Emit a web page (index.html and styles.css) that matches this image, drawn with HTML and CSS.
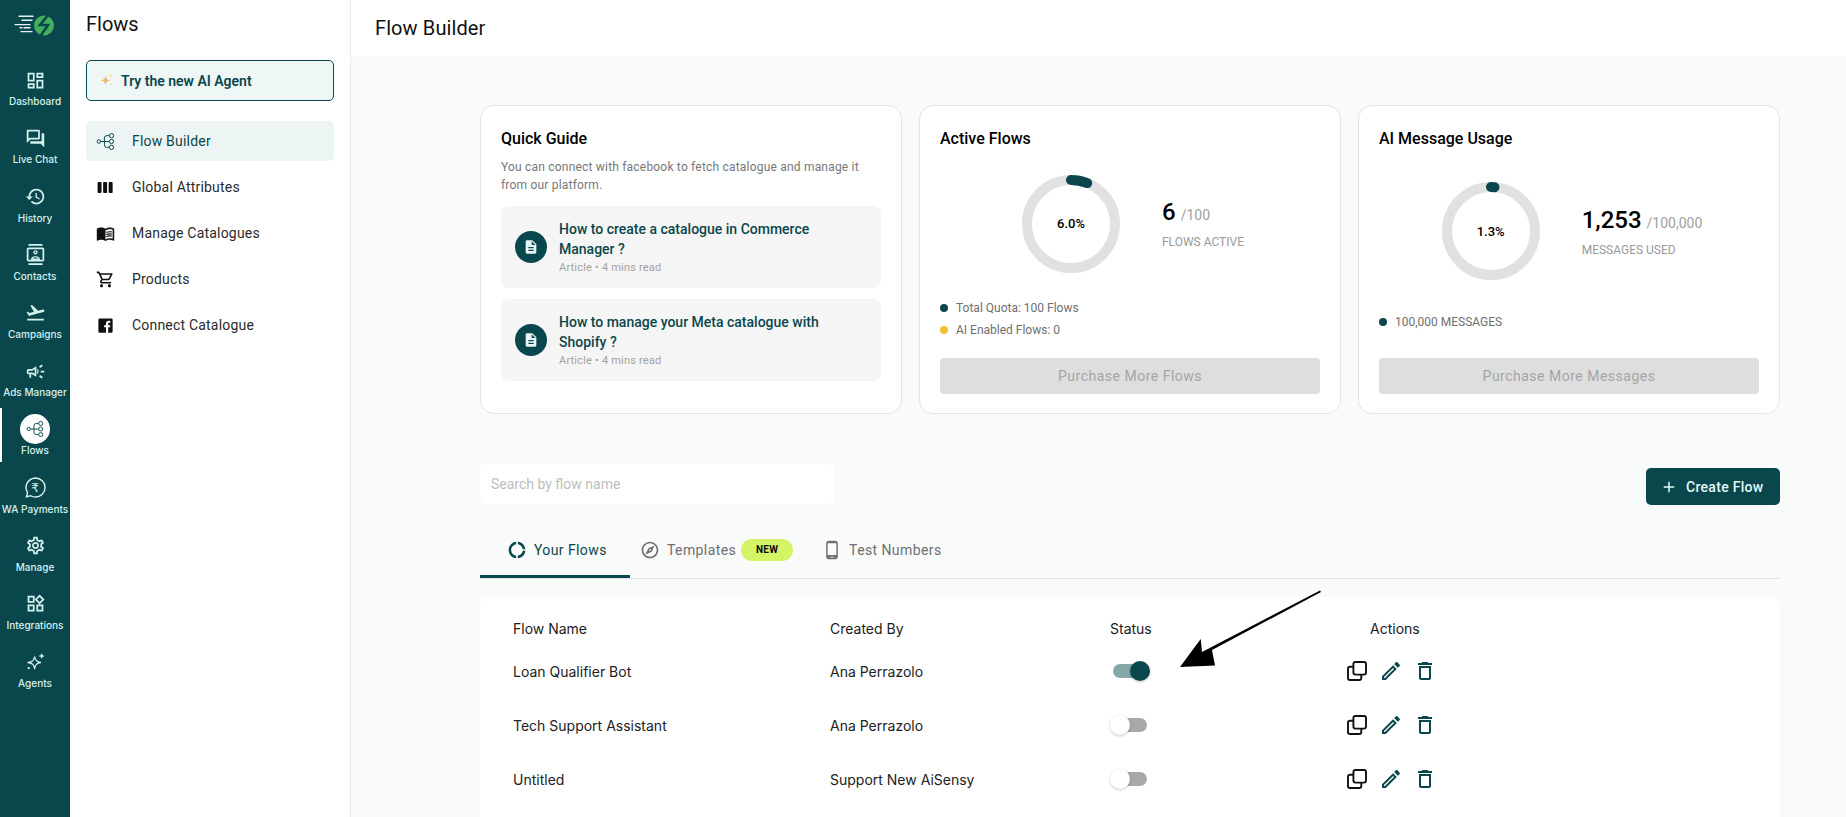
FILE: index.html
```html
<!DOCTYPE html>
<html lang="en">
<head>
<meta charset="utf-8">
<title>Flow Builder</title>
<link rel="stylesheet" href="styles.css">
</head>
<body>
<svg class="defs" width="0" height="0" aria-hidden="true">
  <defs>
    <symbol id="i-flow" viewBox="0 0 24 24"><g fill="none" stroke="currentColor" stroke-width="1.25"><circle cx="3.6" cy="12" r="2.2"/><circle cx="19.6" cy="4.6" r="2.7"/><circle cx="19.6" cy="12" r="2.7"/><circle cx="19.6" cy="19.4" r="2.7"/><path d="M5.8 12h11.1M10.6 12V7.6a3 3 0 0 1 3-3h3.3M10.6 12v4.4a3 3 0 0 0 3 3h3.3"/></g></symbol>
    <symbol id="i-doc" viewBox="0 0 24 24"><path fill="currentColor" d="M14 2H6c-1.1 0-1.99.9-1.99 2L4 20c0 1.1.89 2 1.99 2H18c1.1 0 2-.9 2-2V8l-6-6zm2 16H8v-2h8v2zm0-4H8v-2h8v2zm-3-5V3.5L18.5 9H13z"/></symbol>
    <symbol id="i-copy" viewBox="0 0 24 24"><g fill="none" stroke="currentColor" stroke-width="1.9" stroke-linejoin="round"><rect x="8.4" y="3" width="12.6" height="12.6" rx="2"/><path d="M8.4 7.8H5a2 2 0 0 0-2 2V19a2 2 0 0 0 2 2h9.3a2 2 0 0 0 2-2v-3.4"/></g></symbol>
    <symbol id="i-edit" viewBox="0 0 24 24"><path fill="currentColor" d="M3 17.25V21h3.75L17.81 9.94l-3.75-3.75L3 17.25zM5.92 19H5v-.92l9.06-9.06.92.92L5.92 19zM20.71 5.63l-2.34-2.34c-.2-.2-.45-.29-.71-.29s-.51.1-.7.29l-1.83 1.83 3.75 3.75 1.83-1.83c.39-.39.39-1.02 0-1.41z"/></symbol>
    <symbol id="i-trash" viewBox="0 0 24 24"><path fill="currentColor" d="M6 19c0 1.1.9 2 2 2h8c1.1 0 2-.9 2-2V7H6v12zM8 9h8v10H8V9zm7.5-5l-1-1h-5l-1 1H5v2h14V4z"/></symbol>
  </defs>
</svg>

<nav class="rail">
  <svg class="logo" viewBox="0 0 42 22" width="42" height="22" aria-hidden="true">
    <g stroke="#e4f3ef" stroke-width="1.4" stroke-linecap="round"><path d="M5 2.3h14M8 6.2h10M1 10.6h15M6 13.8h2M10 13.8h6M7 17.6h11"/></g>
    <circle cx="30" cy="11.5" r="10" fill="#43b05c"/>
    <path d="M34.5 0.5 26 11h8l-7.5 11" fill="none" stroke="#0a474c" stroke-width="2.6"/>
  </svg>
  <a class="rail-item"><span class="rail-icon"><svg viewBox="0 0 24 24"><path d="M19 5v2h-4V5h4M9 5v6H5V5h4m10 8v6h-4v-6h4M9 17v2H5v-2h4M21 3h-8v6h8V3zM11 3H3v10h8V3zm10 8h-8v10h8V11zm-10 4H3v6h8v-6z"/></svg></span><span class="rail-label">Dashboard</span></a>
  <a class="rail-item"><span class="rail-icon"><svg viewBox="0 0 24 24"><path d="M15 4v7H5.17L4 12.17V4h11m1-2H3c-.55 0-1 .45-1 1v14l4-4h10c.55 0 1-.45 1-1V3c0-.55-.45-1-1-1zm5 4h-2v9H6v2c0 .55.45 1 1 1h11l4 4V7c0-.55-.45-1-1-1z"/></svg></span><span class="rail-label">Live Chat</span></a>
  <a class="rail-item"><span class="rail-icon"><svg viewBox="0 0 24 24"><path d="M13 3c-4.97 0-9 4.03-9 9H1l3.89 3.89.07.14L9 12H6c0-3.87 3.13-7 7-7s7 3.13 7 7-3.13 7-7 7c-1.93 0-3.68-.79-4.94-2.06l-1.42 1.42C8.27 19.99 10.51 21 13 21c4.97 0 9-4.03 9-9s-4.03-9-9-9zm-1 5v5l4.28 2.54.72-1.21-3.5-2.08V8H12z"/></svg></span><span class="rail-label">History</span></a>
  <a class="rail-item"><span class="rail-icon"><svg viewBox="0 0 24 24"><path d="M20 0H4v2h16V0zM4 24h16v-2H4v2zM20 4H4c-1.1 0-2 .9-2 2v12c0 1.1.9 2 2 2h16c1.1 0 2-.9 2-2V6c0-1.1-.9-2-2-2zm0 14H4V6h16v12zm-8-6c1.38 0 2.5-1.12 2.5-2.5S13.38 7 12 7 9.5 8.12 9.5 9.5 10.62 12 12 12zm0-3.5c.55 0 1 .45 1 1s-.45 1-1 1-1-.45-1-1 .45-1 1-1zM17 16.99c0-2.09-3.31-2.99-5-2.99s-5 .9-5 2.99V18h10v-1.01zM8.81 16.5c.61-.52 2.03-1 3.19-1 1.17 0 2.59.48 3.2 1H8.81z"/></svg></span><span class="rail-label">Contacts</span></a>
  <a class="rail-item"><span class="rail-icon"><svg viewBox="0 0 24 24"><path d="M2.5 19h19v2h-19zm19.57-9.36c-.21-.8-1.04-1.28-1.84-1.06L14.92 10l-6.9-6.43-1.93.51 4.14 7.17-4.97 1.33-1.97-1.54-1.45.39 1.82 3.16.77 1.33 1.6-.43 5.31-1.42 4.35-1.16L21 11.49c.81-.23 1.28-1.05 1.07-1.85z"/></svg></span><span class="rail-label">Campaigns</span></a>
  <a class="rail-item"><span class="rail-icon"><svg viewBox="0 0 24 24"><path d="M18 11v2h4v-2h-4zm-2 6.61c.96.71 2.21 1.65 3.2 2.39.4-.53.8-1.07 1.2-1.6-.99-.74-2.24-1.68-3.2-2.4-.4.54-.8 1.08-1.2 1.61zM20.4 5.6c-.4-.53-.8-1.07-1.2-1.6-.99.74-2.24 1.68-3.2 2.4.4.53.8 1.07 1.2 1.6.96-.72 2.21-1.65 3.2-2.4zM4 9c-1.1 0-2 .9-2 2v2c0 1.1.9 2 2 2h1v4h2v-4h1l5 3V6L8 9H4zm5.03 1.71L11 9.53v4.94l-1.97-1.18-.48-.29H4v-2h4.55l.48-.29zM15.5 12c0-1.33-.58-2.53-1.5-3.35v6.69c.92-.81 1.5-2.01 1.5-3.34z"/></svg></span><span class="rail-label">Ads Manager</span></a>
  <a class="rail-item is-active"><span class="rail-icon"><svg class="flow-mini"><use href="#i-flow"/></svg></span><span class="rail-label">Flows</span></a>
  <a class="rail-item"><span class="rail-icon"><span class="rupee"><svg viewBox="0 0 24 24"><path fill="none" stroke="currentColor" stroke-width="1.5" d="M12 2a10 10 0 0 1 0 20c-2 0-3.700-.5-5-1.400L2.500 21.600l1.200-4.300A10 10 0 0 1 12 2z"/></svg><span class="rupee-sign">₹</span></span></span><span class="rail-label">WA Payments</span></a>
  <a class="rail-item"><span class="rail-icon"><svg viewBox="0 0 24 24"><path d="M19.43 12.98c.04-.32.07-.64.07-.98 0-.34-.03-.66-.07-.98l2.11-1.65c.19-.15.24-.42.12-.64l-2-3.46c-.09-.16-.26-.25-.44-.25-.06 0-.12.01-.17.03l-2.49 1c-.52-.4-1.08-.73-1.69-.98l-.38-2.65C14.46 2.18 14.25 2 14 2h-4c-.25 0-.46.18-.49.42l-.38 2.65c-.61.25-1.17.59-1.69.98l-2.49-1c-.06-.02-.12-.03-.18-.03-.17 0-.34.09-.43.25l-2 3.46c-.13.22-.07.49.12.64l2.11 1.65c-.04.32-.07.65-.07.98 0 .33.03.66.07.98l-2.11 1.65c-.19.15-.24.42-.12.64l2 3.46c.09.16.26.25.44.25.06 0 .12-.01.17-.03l2.49-1c.52.4 1.08.73 1.69.98l.38 2.65c.03.24.24.42.49.42h4c.25 0 .46-.18.49-.42l.38-2.65c.61-.25 1.17-.59 1.69-.98l2.49 1c.06.02.12.03.18.03.17 0 .34-.09.43-.25l2-3.46c.12-.22.07-.49-.12-.64l-2.11-1.65zm-1.98-1.71c.04.31.05.52.05.73 0 .21-.02.43-.05.73l-.14 1.13.89.7 1.08.84-.7 1.21-1.27-.51-1.04-.42-.9.68c-.43.32-.84.56-1.25.73l-1.06.43-.16 1.13-.2 1.35h-1.4l-.19-1.35-.16-1.13-1.06-.43c-.43-.18-.83-.41-1.23-.71l-.91-.7-1.06.43-1.27.51-.7-1.21 1.08-.84.89-.7-.14-1.13c-.03-.31-.05-.54-.05-.74s.02-.43.05-.73l.14-1.13-.89-.7-1.08-.84.7-1.21 1.27.51 1.04.42.9-.68c.43-.32.84-.56 1.25-.73l1.06-.43.16-1.13.2-1.35h1.39l.19 1.35.16 1.13 1.06.43c.43.18.83.41 1.23.71l.91.7 1.06-.43 1.27-.51.7 1.21-1.07.85-.89.7.14 1.13zM12 8c-2.21 0-4 1.790-4 4s1.790 4 4 4 4-1.790 4-4-1.790-4-4-4zm0 6c-1.100 0-2-.9-2-2s.9-2 2-2 2 .9 2 2-.9 2-2 2z"/></svg></span><span class="rail-label">Manage</span></a>
  <a class="rail-item"><span class="rail-icon"><svg viewBox="0 0 24 24"><path d="M16.66 4.520l2.830 2.830-2.830 2.830-2.830-2.830 2.830-2.830M9 5v4H5V5h4m10 10v4h-4v-4h4M9 15v4H5v-4h4m7.660-13.310L11 7.340 16.660 13l5.660-5.660-5.660-5.650zM11 3H3v8h8V3zm10 10h-8v8h8v-8zm-10 0H3v8h8v-8z"/></svg></span><span class="rail-label">Integrations</span></a>
  <a class="rail-item"><span class="rail-icon"><svg viewBox="0 0 24 24"><path d="M11 5.500c.7 4 2.200 5.600 6.700 6.500-4.500.9-6 2.500-6.700 7-.7-4.500-2.300-6.100-7.500-7 5.200-.900 6.800-2.500 7.500-6.500z" fill="none" stroke="currentColor" stroke-width="1.500" stroke-linejoin="round"/><path d="M19 2v5M16.500 4.500h5" fill="none" stroke="currentColor" stroke-width="1.600"/><circle cx="4.200" cy="18.500" r="1.300"/></svg></span><span class="rail-label">Agents</span></a>
</nav>

<aside class="subnav">
  <h2 class="subnav-title">Flows</h2>
  <button class="ai-btn" type="button">
    <svg class="ai-spark" viewBox="0 0 16 16" aria-hidden="true"><path fill="#f7b267" d="M7 3c.6 3.200 1.700 4.300 5 5-3.300.7-4.400 1.800-5 5-.6-3.200-1.700-4.300-5-5 3.300-.7 4.400-1.800 5-5z"/><path fill="#f5d76e" d="M12.500 1c.2 1.300.7 1.800 2 2-1.300.2-1.800.7-2 2-.2-1.300-.7-1.800-2-2 1.300-.2 1.800-.7 2-2zM13 10.500c.2 1 .5 1.300 1.500 1.500-1 .2-1.300.5-1.500 1.500-.2-1-.5-1.300-1.500-1.500 1-.2 1.300-.5 1.500-1.500z"/></svg>
    <span>Try the new AI Agent</span>
  </button>
  <ul class="menu">
    <li class="menu-item is-current"><svg class="menu-icon"><use href="#i-flow"/></svg><span>Flow Builder</span></li>
    <li class="menu-item"><svg class="menu-icon" viewBox="0 0 24 24"><path d="M6 5H3c-.55 0-1 .45-1 1v12c0 .55.45 1 1 1h3c.55 0 1-.45 1-1V6c0-.55-.45-1-1-1zm14 0h-3c-.55 0-1 .45-1 1v12c0 .55.45 1 1 1h3c.55 0 1-.45 1-1V6c0-.55-.45-1-1-1zm-7 0h-3c-.55 0-1 .45-1 1v12c0 .55.45 1 1 1h3c.55 0 1-.45 1-1V6c0-.55-.45-1-1-1z"/></svg><span>Global Attributes</span></li>
    <li class="menu-item"><svg class="menu-icon" viewBox="0 0 24 24"><path d="M21 5c-1.110-.35-2.330-.5-3.500-.5-1.950 0-4.050.4-5.500 1.500-1.450-1.100-3.550-1.500-5.500-1.500S2.450 4.900 1 6v14.650c0 .25.25.5.5.5.1 0 .15-.05.25-.05C3.100 20.450 5.050 20 6.500 20c1.950 0 4.050.4 5.500 1.500 1.350-.85 3.800-1.500 5.500-1.500 1.650 0 3.350.3 4.750 1.050.1.05.15.05.25.05.25 0 .5-.25.5-.5V6c-.6-.45-1.250-.75-2-1zm0 13.500c-1.100-.35-2.300-.5-3.500-.5-1.700 0-4.150.65-5.500 1.500V8c1.350-.85 3.800-1.500 5.500-1.500 1.200 0 2.400.15 3.500.5v11.500z"/><path d="M17.500 10.500c.88 0 1.730.09 2.500.26V9.240c-.79-.15-1.640-.24-2.500-.24-1.700 0-3.240.29-4.500.83v1.660c1.130-.64 2.700-.99 4.500-.99zM13 12.490v1.660c1.130-.64 2.700-.99 4.500-.99.88 0 1.730.09 2.500.26V11.900c-.79-.15-1.640-.24-2.500-.24-1.700 0-3.240.3-4.500.83zM17.500 14.330c-1.700 0-3.240.29-4.500.83v1.660c1.130-.64 2.700-.99 4.500-.99.88 0 1.730.09 2.500.26v-1.520c-.79-.16-1.640-.24-2.500-.24z"/></svg><span>Manage Catalogues</span></li>
    <li class="menu-item"><svg class="menu-icon" viewBox="0 0 24 24"><path d="M15.550 13c.75 0 1.410-.41 1.750-1.030l3.580-6.490c.37-.66-.11-1.480-.87-1.480H5.210l-.94-2H1v2h2l3.600 7.590-1.350 2.440C4.520 15.370 5.480 17 7 17h12v-2H7l1.100-2h7.450zM6.160 6h12.150l-2.760 5H8.530L6.160 6zM7 18c-1.100 0-1.990.9-1.990 2S5.900 22 7 22s2-.9 2-2-.9-2-2-2zm10 0c-1.100 0-1.990.9-1.990 2s.89 2 1.990 2 2-.9 2-2-.9-2-2-2z"/></svg><span>Products</span></li>
    <li class="menu-item"><svg class="menu-icon" viewBox="0 0 24 24"><path d="M19.500 3h-15A1.500 1.500 0 0 0 3 4.500v15A1.500 1.500 0 0 0 4.500 21h8.100v-6.700h-2.300v-2.700h2.300v-2c0-2.300 1.400-3.600 3.500-3.600.7 0 1.600.1 2 .2v2.400h-1.400c-1.100 0-1.300.5-1.300 1.300v1.700h2.700l-.4 2.700h-2.300V21h4.100a1.500 1.500 0 0 0 1.500-1.500v-15A1.500 1.500 0 0 0 19.500 3z"/></svg><span>Connect Catalogue</span></li>
  </ul>
</aside>

<div class="main">
  <header class="topbar"><h1 class="topbar-title">Flow Builder</h1></header>
  <div class="content">
    <section class="cards">
      <article class="card">
        <h3 class="card-title">Quick Guide</h3>
        <p class="guide-desc">You can connect with facebook to fetch catalogue and manage it from our platform.</p>
        <div class="guide-item">
          <span class="guide-badge"><svg class="guide-doc"><use href="#i-doc"/></svg></span>
          <div class="guide-text">
            <div class="guide-name">How to create a catalogue in Commerce Manager ?</div>
            <div class="guide-meta">Article • 4 mins read</div>
          </div>
        </div>
        <div class="guide-item">
          <span class="guide-badge"><svg class="guide-doc"><use href="#i-doc"/></svg></span>
          <div class="guide-text">
            <div class="guide-name">How to manage your Meta catalogue with Shopify ?</div>
            <div class="guide-meta">Article • 4 mins read</div>
          </div>
        </div>
      </article>

      <article class="card">
        <h3 class="card-title">Active Flows</h3>
        <div class="card-body">
          <div class="gauge-row">
            <div class="donut">
              <svg viewBox="0 0 98 98" width="98" height="98" aria-hidden="true"><circle class="donut-track" cx="49" cy="49" r="44"/><circle class="donut-bar" cx="49" cy="49" r="44" pathLength="100" stroke-dasharray="6 100"/></svg>
              <span class="donut-text">6.0%</span>
            </div>
            <div class="stats">
              <div class="stats-line"><span class="stats-num">6</span><span class="stats-max">/100</span></div>
              <div class="stats-label">FLOWS ACTIVE</div>
            </div>
          </div>
          <ul class="legend">
            <li class="legend-item"><i class="dot"></i>Total Quota: 100 Flows</li>
            <li class="legend-item"><i class="dot dot-yellow"></i>AI Enabled Flows: 0</li>
          </ul>
        </div>
        <button class="buy-btn" type="button">Purchase More Flows</button>
      </article>

      <article class="card">
        <h3 class="card-title">AI Message Usage</h3>
        <div class="card-body">
          <div class="gauge-row">
            <div class="donut">
              <svg viewBox="0 0 98 98" width="98" height="98" aria-hidden="true"><circle class="donut-track" cx="49" cy="49" r="44"/><circle class="donut-bar" cx="49" cy="49" r="44" pathLength="100" stroke-dasharray="1.3 100"/></svg>
              <span class="donut-text">1.3%</span>
            </div>
            <div class="stats">
              <div class="stats-line"><span class="stats-num">1,253</span><span class="stats-max">/100,000</span></div>
              <div class="stats-label">MESSAGES USED</div>
            </div>
          </div>
          <ul class="legend legend-wide">
            <li class="legend-item"><i class="dot"></i>100,000 MESSAGES</li>
          </ul>
        </div>
        <button class="buy-btn" type="button">Purchase More Messages</button>
      </article>
    </section>

    <div class="toolbar">
      <input class="search" type="text" placeholder="Search by flow name">
      <button class="create-btn" type="button"><svg class="plus" viewBox="0 0 24 24"><path d="M19 13h-6v6h-2v-6H5v-2h6V5h2v6h6v2z"/></svg><span>Create Flow</span></button>
    </div>

    <div class="tabs">
      <div class="tab tab-flows is-on"><svg class="tab-icon" viewBox="0 0 24 24"><path d="M11 5.080V2c-5 .5-9 4.810-9 10s4 9.500 9 10v-3.080c-3-.48-6-3.190-6-6.920s3-6.440 6-6.920zM18.970 11H22c-.47-5-4-8.530-9-9v3.080C16 5.510 18.540 8 18.970 11zM13 18.920V22c5-.47 8.530-4 9-9h-3.030c-.43 3-2.970 5.490-5.970 5.920z"/></svg><span>Your Flows</span></div>
      <div class="tab tab-templates"><svg class="tab-icon" viewBox="0 0 24 24"><path d="M12 2C6.480 2 2 6.480 2 12s4.480 10 10 10 10-4.480 10-10S17.520 2 12 2zm0 18c-4.410 0-8-3.590-8-8s3.590-8 8-8 8 3.590 8 8-3.590 8-8 8zm-5.500-2.500l7.510-3.490L17.500 6.500 9.990 9.990 6.500 17.500zm5.500-6.600c.61 0 1.100.49 1.100 1.100s-.49 1.100-1.100 1.100-1.100-.49-1.100-1.100.49-1.100 1.100-1.100z"/></svg><span>Templates</span><b class="new-badge">NEW</b></div>
      <div class="tab tab-numbers"><svg class="tab-icon" viewBox="0 0 24 24"><path d="M16 1H8C6.340 1 5 2.340 5 4v16c0 1.660 1.340 3 3 3h8c1.660 0 3-1.340 3-3V4c0-1.660-1.340-3-3-3zm-2 20h-4v-1h4v1zm3.250-3H6.750V4h10.500v14z"/></svg><span>Test Numbers</span></div>
    </div>

    <section class="table">
      <div class="row row-head">
        <div>Flow Name</div><div>Created By</div><div>Status</div><div class="head-actions">Actions</div>
      </div>
      <div class="row">
        <div>Loan Qualifier Bot</div><div>Ana Perrazolo</div>
        <div><span class="switch is-on"><i class="knob"></i></span></div>
        <div class="actions"><svg class="act act-copy"><use href="#i-copy"/></svg><svg class="act"><use href="#i-edit"/></svg><svg class="act"><use href="#i-trash"/></svg></div>
      </div>
      <div class="row">
        <div>Tech Support Assistant</div><div>Ana Perrazolo</div>
        <div><span class="switch"><i class="knob"></i></span></div>
        <div class="actions"><svg class="act act-copy"><use href="#i-copy"/></svg><svg class="act"><use href="#i-edit"/></svg><svg class="act"><use href="#i-trash"/></svg></div>
      </div>
      <div class="row">
        <div>Untitled</div><div>Support New AiSensy</div>
        <div><span class="switch"><i class="knob"></i></span></div>
        <div class="actions"><svg class="act act-copy"><use href="#i-copy"/></svg><svg class="act"><use href="#i-edit"/></svg><svg class="act"><use href="#i-trash"/></svg></div>
      </div>
    </section>
  </div>
</div>

<svg class="arrow" viewBox="0 0 160 90" width="160" height="90" aria-hidden="true">
  <path fill="#000" d="M140 0.500 141 2 32 60 35 75.500 0 77 20.700 49 22 62z"/>
</svg>
</body>
</html>
```

FILE: styles.css
```css
* { box-sizing: border-box; }
html, body { margin: 0; padding: 0; }
body {
  display: flex;
  width: 1846px;
  height: 817px;
  overflow: hidden;
  position: relative;
  background: #f9fafa;
  font-family: Roboto, "Liberation Sans", sans-serif;
  color: #111;
}
.defs { position: absolute; }
h1, h2, h3, p, ul { margin: 0; padding: 0; }
ul { list-style: none; }
button { font-family: inherit; border: 0; }

/* rail */
.rail {
  flex: 0 0 70px;
  display: flex;
  flex-direction: column;
  gap: 4.2px;
  padding-top: 14px;
  background: #0a474c;
}
.logo { display: block; margin: 0 0 19px 14px; }
.rail-item {
  display: flex;
  flex-direction: column;
  align-items: center;
  height: 54px;
  padding-top: 6px;
  color: #d4f1ee;
}
.rail-item.is-active { box-shadow: inset 2px 0 0 #fff; }
.rail-icon {
  display: flex;
  align-items: center;
  justify-content: center;
  width: 30px;
  height: 30px;
}
.rail-icon svg { width: 21px; height: 21px; fill: currentColor; }
.is-active .rail-icon { background: #fff; border-radius: 50%; color: #0a474c; }
.is-active .rail-icon .flow-mini { width: 18px; height: 18px; fill: none; }
.rail-label {
  font: 500 10px/12px Inter, Roboto, sans-serif;
  white-space: nowrap;
}
.rupee { display: grid; place-items: center; }
.rupee > * { grid-area: 1 / 1; }
.rupee svg { width: 23px; height: 23px; }
.rupee-sign { font: 500 12px/1 "DejaVu Sans", sans-serif; }

/* sub navigation */
.subnav {
  flex: 0 0 281px;
  padding: 0 16px;
  background: #fff;
  border-right: 1px solid #ececec;
}
.subnav-title {
  margin-top: 12px;
  font-size: 20px;
  line-height: 24px;
  font-weight: 400;
  color: #111;
}
.ai-btn {
  display: flex;
  align-items: center;
  gap: 7px;
  width: 248px;
  height: 41px;
  margin-top: 24px;
  padding: 0 12px;
  background: #eff7f6;
  border: 1px solid #0a474c;
  border-radius: 5px;
  font-size: 14px;
  font-weight: 600;
  color: #0a474c;
}
.ai-spark { width: 15px; height: 15px; flex: none; }
.menu { display: flex; flex-direction: column; gap: 6px; margin-top: 20px; }
.menu-item {
  display: flex;
  align-items: center;
  gap: 17px;
  height: 40px;
  padding-left: 10px;
  border-radius: 5px;
  font-size: 14px;
  letter-spacing: .2px;
  color: #2b2b2b;
}
.menu-item.is-current { background: #edf5f4; color: #0a474c; }
.menu-icon { flex: none; width: 19px; height: 19px; fill: #111; }
.is-current .menu-icon { fill: none; color: #0a474c; }

/* main */
.main { flex: 1; display: flex; flex-direction: column; min-width: 0; }
.topbar {
  flex: none;
  display: flex;
  align-items: center;
  height: 57px;
  padding-left: 24px;
  background: #fff;
  border-bottom: 1px solid #f4f5f5;
}
.topbar-title { font-size: 20px; font-weight: 400; color: #111; letter-spacing: .1px; }
.content { flex: 1; padding: 48px 66px 0 129px; min-height: 0; }

.cards { display: grid; grid-template-columns: repeat(3, 1fr); gap: 17px; height: 309px; }
.card {
  display: flex;
  flex-direction: column;
  padding: 24px 20px 19px;
  background: #fff;
  border: 1px solid #e3e4e5;
  border-radius: 14px;
}
.card-title { font-size: 16px; line-height: 18px; font-weight: 500; color: #000; }
.guide-desc { margin-top: 11px; font-size: 12px; line-height: 17.5px; color: #777; letter-spacing: .2px; }
.guide-item {
  display: flex;
  align-items: center;
  gap: 12px;
  height: 82px;
  margin-top: 11px;
  padding: 0 14px;
  background: #f5f5f5;
  border-radius: 8px;
}
.guide-desc + .guide-item { margin-top: 12px; }
.guide-badge {
  flex: none;
  display: flex;
  align-items: center;
  justify-content: center;
  width: 32px;
  height: 32px;
  border-radius: 50%;
  background: #0a474c;
  color: #eaf6f4;
}
.guide-doc { width: 16px; height: 16px; }
.guide-name { font-size: 14px; line-height: 20px; font-weight: 500; color: #0a474c; }
.guide-meta { margin-top: 1px; font-size: 11px; line-height: 16px; color: #a3a3a3; letter-spacing: .2px; }

.card-body {
  flex: 1;
  display: flex;
  flex-direction: column;
  justify-content: center;
  padding-top: 9px;
}
.gauge-row { display: flex; align-items: center; justify-content: center; gap: 42px; padding-left: 6px; }
.donut { display: grid; place-items: center; flex: none; }
.donut > * { grid-area: 1 / 1; }
.donut svg { transform: rotate(-90deg); display: block; }
.donut-track { fill: none; stroke: #e1e1e1; stroke-width: 10; }
.donut-bar { fill: none; stroke: #0a474c; stroke-width: 10; stroke-linecap: round; }
.donut-text { font-size: 13px; font-weight: 500; color: #000; }
.stats { margin-bottom: 3px; }
.stats-line { display: flex; align-items: baseline; gap: 5px; line-height: 34px; }
.stats-num { font-size: 24px; font-weight: 500; color: #000; }
.stats-max { font-size: 14px; color: #a0a0a0; }
.stats-label { margin-top: 3px; font-size: 12px; line-height: 14px; color: #9a9a9a; }
.legend { margin-top: 24px; }
.legend-wide { margin-top: 31px; }
.legend-item {
  display: flex;
  align-items: center;
  gap: 8px;
  height: 22px;
  font-size: 12px;
  color: #6f6f6f;
}
.dot { width: 8px; height: 8px; border-radius: 50%; background: #0a474c; flex: none; }
.dot-yellow { background: #eec22e; }
.buy-btn {
  flex: none;
  height: 36px;
  border-radius: 4px;
  background: #dedede;
  font-size: 14px;
  letter-spacing: .5px;
  color: #a5a5a5;
}

/* toolbar */
.toolbar { display: flex; justify-content: space-between; align-items: flex-start; margin-top: 50px; height: 41px; }
.search {
  width: 354px;
  height: 40px;
  padding: 0 11px;
  border: 0;
  border-radius: 6px;
  background: #fff;
  font: 400 14px Roboto, sans-serif;
  outline: none;
}
.search::placeholder { color: #bdbdbd; }
.create-btn {
  display: flex;
  align-items: center;
  gap: 8px;
  width: 134px;
  height: 37px;
  margin-top: 4px;
  padding: 0 14px;
  background: #0a474c;
  border-radius: 5px;
  font-size: 14px;
  font-weight: 500;
  letter-spacing: .3px;
  color: #e3f8f6;
}
.plus { width: 18px; height: 18px; fill: currentColor; flex: none; }

/* tabs */
.tabs {
  display: flex;
  align-items: center;
  height: 55px;
  margin-top: 19px;
  padding-bottom: 3px;
  border-bottom: 1px solid #e3e4e5;
  font-size: 14px;
  letter-spacing: .4px;
  color: #6f6f6f;
}
.tab { display: flex; align-items: center; height: 100%; }
.tab-icon { width: 20px; height: 20px; flex: none; fill: currentColor; }
.tab-flows {
  width: 150px;
  gap: 7px;
  padding-left: 27px;
  color: #0a474c;
  box-shadow: 0 3px 0 #0a474c;
}
.tab-templates { gap: 7px; padding-left: 10px; }
.tab-numbers { gap: 7px; padding-left: 29px; }
.new-badge {
  display: flex;
  align-items: center;
  justify-content: center;
  width: 52px;
  height: 22px;
  margin-left: -2px;
  border-radius: 11px;
  background: #d2f465;
  font-size: 10px;
  font-weight: 700;
  letter-spacing: .2px;
  color: #0b0b0b;
}

/* table */
.table {
  height: 300px;
  margin-top: 18px;
  padding-top: 15px;
  background: #fff;
  border-radius: 8px 8px 0 0;
}
.row {
  display: grid;
  grid-template-columns: 317px 280px 234px 1fr;
  align-items: center;
  height: 54px;
  padding-left: 33px;
  font: 400 14px Inter, Roboto, sans-serif;
  color: #222;
}
.row-head { height: 32px; color: #1b1b1b; }
.head-actions { padding-left: 26px; }
.switch {
  position: relative;
  display: block;
  width: 34px;
  height: 14px;
  margin-left: 3px;
  border-radius: 7px;
  background: #a9a9a9;
}
.switch.is-on { background: #85a8a8; }
.knob {
  position: absolute;
  top: -3px;
  left: -3px;
  width: 20px;
  height: 20px;
  border-radius: 50%;
  background: #fff;
  box-shadow: 0 1px 3px rgba(0,0,0,.22);
}
.is-on .knob { left: 17px; background: #0a474c; }
.actions { display: flex; gap: 10px; padding-left: 1px; color: #0a474c; }
.act { width: 24px; height: 24px; flex: none; }
.act-copy { color: #111; }

/* annotation arrow */
.arrow { position: absolute; left: 1180px; top: 590px; }
```
